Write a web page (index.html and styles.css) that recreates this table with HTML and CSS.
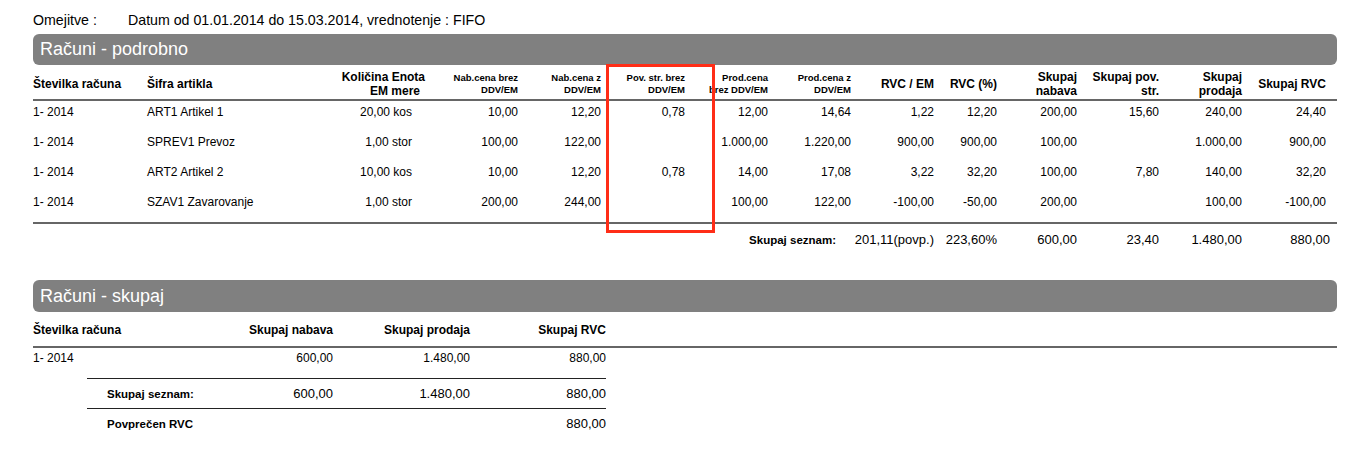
FILE: index.html
```html
<!DOCTYPE html>
<html lang="sl">
<head>
<meta charset="utf-8">
<title>Računi</title>
<link rel="stylesheet" href="styles.css">
</head>
<body>
<div class="page">
  <div class="filter"><span class="filter-label">Omejitve :</span><span>Datum od 01.01.2014 do 15.03.2014, vrednotenje : FIFO</span></div>

  <section class="section">
    <div class="bar">Računi - podrobno</div>
    <table class="detail">
      <colgroup>
        <col style="width:114px"><col style="width:183px"><col style="width:95px"><col style="width:93px">
        <col style="width:83px"><col style="width:84px"><col style="width:83px"><col style="width:83px">
        <col style="width:83px"><col style="width:63px"><col style="width:80px"><col style="width:82px">
        <col style="width:83px"><col style="width:95px">
      </colgroup>
      <thead>
        <tr>
          <th class="l">Številka računa</th>
          <th class="l">Šifra artikla</th>
          <th class="r">Količina Enota<br><span class="em">EM mere</span></th>
          <th class="r sm">Nab.cena brez<br>DDV/EM</th>
          <th class="r sm">Nab.cena z<br>DDV/EM</th>
          <th class="r sm">Pov. str. brez<br>DDV/EM</th>
          <th class="r sm">Prod.cena<br>brez DDV/EM</th>
          <th class="r sm">Prod.cena z<br>DDV/EM</th>
          <th class="r">RVC / EM</th>
          <th class="r">RVC (%)</th>
          <th class="r">Skupaj<br>nabava</th>
          <th class="r">Skupaj pov.<br>str.</th>
          <th class="r">Skupaj<br>prodaja</th>
          <th class="r last">Skupaj RVC</th>
        </tr>
      </thead>
      <tbody>
        <tr class="first">
          <td>1- 2014</td><td>ART1 Artikel 1</td><td class="r qty">20,00 kos</td><td class="r">10,00</td><td class="r">12,20</td><td class="r">0,78</td><td class="r">12,00</td><td class="r">14,64</td><td class="r">1,22</td><td class="r">12,20</td><td class="r">200,00</td><td class="r">15,60</td><td class="r">240,00</td><td class="r last">24,40</td>
        </tr>
        <tr>
          <td>1- 2014</td><td>SPREV1 Prevoz</td><td class="r qty">1,00 stor</td><td class="r">100,00</td><td class="r">122,00</td><td class="r"></td><td class="r">1.000,00</td><td class="r">1.220,00</td><td class="r">900,00</td><td class="r">900,00</td><td class="r">100,00</td><td class="r"></td><td class="r">1.000,00</td><td class="r last">900,00</td>
        </tr>
        <tr>
          <td>1- 2014</td><td>ART2 Artikel 2</td><td class="r qty">10,00 kos</td><td class="r">10,00</td><td class="r">12,20</td><td class="r">0,78</td><td class="r">14,00</td><td class="r">17,08</td><td class="r">3,22</td><td class="r">32,20</td><td class="r">100,00</td><td class="r">7,80</td><td class="r">140,00</td><td class="r last">32,20</td>
        </tr>
        <tr class="final">
          <td>1- 2014</td><td>SZAV1 Zavarovanje</td><td class="r qty">1,00 stor</td><td class="r">200,00</td><td class="r">244,00</td><td class="r"></td><td class="r">100,00</td><td class="r">122,00</td><td class="r">-100,00</td><td class="r">-50,00</td><td class="r">200,00</td><td class="r"></td><td class="r">100,00</td><td class="r last">-100,00</td>
        </tr>
      </tbody>
      <tfoot>
        <tr>
          <td colspan="8" class="r total-label">Skupaj seznam:</td>
          <td class="r">201,11(povp.)</td>
          <td class="r">223,60%</td>
          <td class="r">600,00</td>
          <td class="r">23,40</td>
          <td class="r">1.480,00</td>
          <td class="r total-last">880,00</td>
        </tr>
      </tfoot>
    </table>
    <div class="highlight"></div>
  </section>

  <section class="section second">
    <div class="bar">Računi - skupaj</div>
    <table class="summary">
      <colgroup>
        <col style="width:197px"><col style="width:103px"><col style="width:137px"><col style="width:136px"><col style="width:731px">
      </colgroup>
      <thead>
        <tr>
          <th class="l">Številka računa</th>
          <th class="r">Skupaj nabava</th>
          <th class="r">Skupaj prodaja</th>
          <th class="r">Skupaj RVC</th>
          <th></th>
        </tr>
      </thead>
      <tbody>
        <tr>
          <td>1- 2014</td><td class="r">600,00</td><td class="r">1.480,00</td><td class="r">880,00</td><td></td>
        </tr>
      </tbody>
    </table>
    <div class="totals">
      <div class="trow">
        <span class="tlabel">Skupaj seznam:</span>
        <span class="tval">600,00</span>
        <span class="tval">1.480,00</span>
        <span class="tval">880,00</span>
      </div>
      <div class="trow">
        <span class="tlabel">Povprečen RVC</span>
        <span class="tval"></span>
        <span class="tval"></span>
        <span class="tval">880,00</span>
      </div>
    </div>
  </section>
</div>
</body>
</html>
```

FILE: styles.css
```css
* { box-sizing: border-box; }
body {
  margin: 0;
  background: #fff;
  color: #000;
  font-family: "Liberation Sans", Arial, Helvetica, sans-serif;
}
.page {
  padding: 12px 31px 0 33px;
  width: 1368px;
}
.filter {
  display: flex;
  font-size: 14.2px;
  line-height: 17px;
  height: 22px;
}
.filter-label { width: 95px; }

.section { position: relative; }
.bar {
  background: #808080;
  color: #fff;
  font-size: 18px;
  line-height: 31px;
  height: 31px;
  padding-left: 7px;
  border-radius: 6px;
}

table {
  border-collapse: collapse;
  table-layout: fixed;
  width: 1304px;
}
th, td { padding: 0; }
.l { text-align: left; }
.r { text-align: right; }

.detail thead th {
  font-size: 12px;
  font-weight: bold;
  line-height: 14px;
  height: 35px;
  padding-top: 3px;
  vertical-align: middle;
  border-bottom: 2px solid #666;
}
.detail thead th.sm {
  font-size: 9.5px;
  line-height: 12px;
}
.detail thead th .em { padding-right: 5px; }
.detail thead th.last { padding-right: 11px; }

.detail tbody td {
  font-size: 12px;
  line-height: 14px;
  height: 30px;
  padding-top: 5px;
  vertical-align: top;
  white-space: nowrap;
}
.detail tbody tr.first td { padding-top: 4px; height: 30px; }
.detail tbody td.qty { padding-right: 13px; }
.detail tbody td.last { padding-right: 11px; }
.detail tbody tr.final td {
  height: 33px;
  border-bottom: 2px solid #666;
}

.detail tfoot td {
  font-size: 13px;
  line-height: 16px;
  height: 32px;
  padding-top: 1px;
  vertical-align: middle;
  white-space: nowrap;
}
.detail tfoot td.total-label {
  font-size: 11.5px;
  font-weight: bold;
  padding-right: 15px;
}
.detail tfoot td.total-last { padding-right: 7px; }

.highlight {
  position: absolute;
  left: 573px;
  top: 30px;
  width: 109px;
  height: 169px;
  border: 3px solid #ff2d17;
}

.second { margin-top: 25px; }
.second .bar { height: 32px; line-height: 32px; }

.summary thead th {
  font-size: 12px;
  font-weight: bold;
  line-height: 14px;
  height: 35px;
  padding-top: 2px;
  vertical-align: middle;
  border-bottom: 2px solid #666;
}
.summary tbody td {
  font-size: 12px;
  line-height: 14px;
  height: 31px;
  padding-top: 3px;
  vertical-align: top;
}

.totals {
  margin-left: 54px;
  width: 519px;
}
.trow {
  display: grid;
  grid-template-columns: 143px 103px 137px 136px;
  align-items: center;
  height: 30px;
  border-top: 1px solid #222;
}
.tlabel {
  padding-left: 20px;
  font-size: 11.5px;
  font-weight: bold;
}
.tval {
  text-align: right;
  font-size: 13px;
}
```
